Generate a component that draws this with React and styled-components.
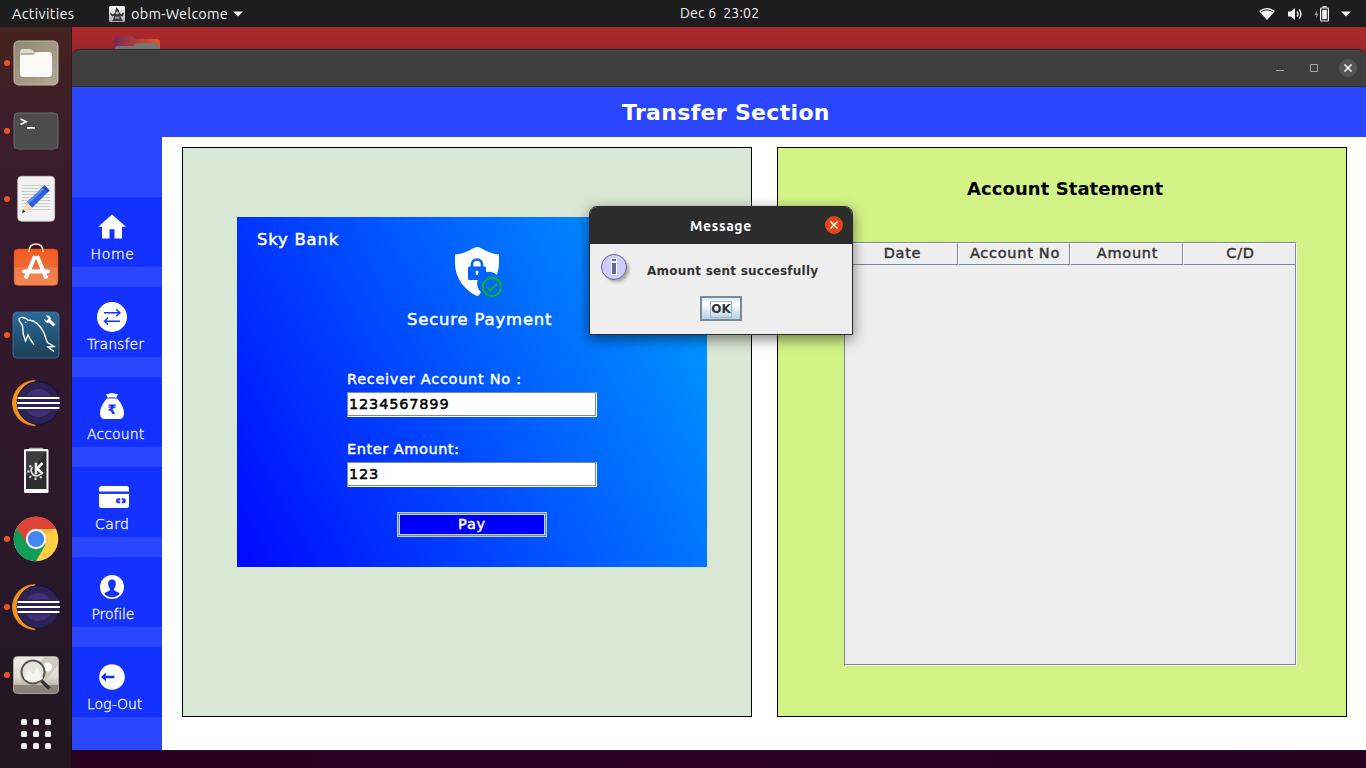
import React from "react";
import styled, { createGlobalStyle } from "styled-components";

const GlobalStyle = createGlobalStyle`
  * { box-sizing: border-box; }
  body { margin: 0; overflow: hidden; }
`;

const ui = `"Ubuntu", "Noto Sans", sans-serif`;
const swing = `"DejaVu Sans", sans-serif`;

const Desktop = styled.div`
  width: 1366px;
  height: 768px;
  display: flex;
  flex-direction: column;
  background: #2c0020;
  position: relative;
  overflow: hidden;
`;

/* ---------- top bar ---------- */
const TopBar = styled.header`
  height: 27px;
  flex: none;
  display: flex;
  align-items: center;
  background: #1d1d1d;
  color: #f2f2f2;
  font: 14.5px/27px ${ui};
  white-space: pre;
`;
const Activities = styled.span`
  width: 109px;
  padding-left: 12px;
  letter-spacing: 0.3px;
`;
const AppMenu = styled.div`
  width: 571px;
  display: flex;
  align-items: center;
  gap: 5px;
`;
const AppName = styled.span`
  margin: 0 -1px 0 1px;
  letter-spacing: 0.25px;
`;
const Clock = styled.span`
  width: 579px;
  font-size: 14px;
  letter-spacing: 0.22px;
`;
const Tray = styled.div`
  display: flex;
  align-items: center;
  gap: 11px;
`;

/* ---------- dock ---------- */
const Workspace = styled.div`
  flex: 1;
  display: flex;
  min-height: 0;
`;
const DockBar = styled.nav`
  width: 72px;
  padding-top: 2px;
  background: linear-gradient(#45231f 0%, #3d1d29 12%, #36192c 30%, #2f182b 55%, #28172a 78%, #22171d 100%);
  border-right: 1px solid rgba(20, 5, 15, 0.35);
`;
const DockItem = styled.div`
  height: 68px;
  display: flex;
  align-items: center;
`;
const RunDot = styled.i`
  width: 6px;
  height: 6px;
  margin: 0 2px 0 4px;
  border-radius: 50%;
  background: ${(p) => (p.$on ? "#e95420" : "transparent")};
`;
const AppGrid = styled.div`
  display: grid;
  grid-template-columns: repeat(3, 6px);
  gap: 6px;
  padding: 10px 0 0 21px;
`;
const GridDot = styled.i`
  height: 6px;
  border-radius: 1.5px;
  background: #eeeeec;
`;

/* ---------- window ---------- */
const Stage = styled.div`
  flex: 1;
  display: flex;
  flex-direction: column;
`;
const Wallpaper = styled.div`
  height: 31px;
  margin-bottom: -9px;
  padding: 9px 0 0 42px;
  background: linear-gradient(#ad292d, #a4272c 50%, #87222a);
`;
const TitleBar = styled.div`
  height: 38px;
  display: flex;
  align-items: center;
  justify-content: flex-end;
  gap: 18px;
  padding-right: 9px;
  background: #3e3e3e;
  border-top: 1px solid #262626;
  border-bottom: 1px solid #2a2a2a;
  border-radius: 8px 8px 0 0;
  box-shadow: inset 0 1px 0 #4b4b4b;
  position: relative;
`;
const WindowButton = styled.span`
  width: ${(p) => (p.$round ? 18 : 16)}px;
  height: 18px;
  margin-right: ${(p) => p.$nudge || 0}px;
  border-radius: 50%;
  background: ${(p) => p.$fill || "transparent"};
  display: flex;
  align-items: center;
  justify-content: center;
`;
const Banner = styled.h1`
  margin: 0;
  height: 50px;
  padding-left: 550px;
  background: #2b46ff;
  color: #fff;
  font: bold 22px/52px ${swing};
  letter-spacing: 0.32px;
`;
const Client = styled.div`
  height: 613px;
  display: flex;
  background: #fff;
`;
const Floor = styled.div`
  flex: 1;
  border-top: 1px solid #1d1820;
  background: linear-gradient(90deg, #290020, #2d0024 50%, #270020);
`;
const Sidebar = styled.aside`
  width: 90px;
  padding-top: 60px;
  background: #2b46ff;
  display: flex;
  flex-direction: column;
  gap: 20px;
`;
const NavItem = styled.div`
  height: 70px;
  padding: 13px 0 0 24px;
  background: #1432ff;
  color: #fff;
`;
const NavGlyph = styled.svg`
  display: block;
  width: 34px;
  height: 34px;
  fill: #fff;
`;
const NavLabel = styled.div`
  margin-top: 1px;
  margin-left: ${(p) => p.$shift}px;
  font: 200 14px/18px "DejaVu Sans", "DejaVu Sans Light", sans-serif;
  letter-spacing: ${(p) => p.$track || 0}px;
  -webkit-text-stroke: 0.3px #fff;
  white-space: nowrap;
`;
const Content = styled.main`
  flex: 1;
  display: flex;
  gap: 25px;
  padding: 10px 0 0 20px;
`;
const Panel = styled.section`
  width: 570px;
  height: 570px;
  border: 1px solid #000;
  background: ${(p) => p.$fill};
  padding: ${(p) => p.$pad};
`;

/* ---------- payment card ---------- */
const PayCard = styled.div`
  width: 470px;
  height: 350px;
  padding: 13px 0 0 20px;
  background: linear-gradient(61deg, #0008ff, #00a2ff);
  color: #fff;
  font-family: ${swing};
`;
const CardTitle = styled.div`
  font-size: 16.4px;
  line-height: 20px;
  letter-spacing: ${(p) => p.$track}px;
  -webkit-text-stroke: 0.5px #fff;
`;
const SecureBlock = styled.div`
  padding-left: 150px;
  margin-top: -4px;
`;
const ShieldBox = styled.div`
  height: 64px;
  padding-left: 47px;
`;
const Form = styled.form`
  padding-left: 90px;
  margin-top: 39px;
`;
const FieldLabel = styled.label`
  display: block;
  font: 14.5px/20px ${swing};
  letter-spacing: ${(p) => p.$track}px;
  -webkit-text-stroke: 0.45px #fff;
  margin-bottom: 3px;
`;
const Field = styled.input`
  display: block;
  width: 250px;
  height: 25px;
  margin-bottom: 22px;
  padding: 0 0 2px 1px;
  border: 1px solid #7a8a99;
  border-right-color: #fff;
  border-bottom-color: #fff;
  box-shadow: inset -1px -1px 0 #7a8a99;
  background: #fff;
  color: #000;
  font: 14.5px/20px ${swing};
  letter-spacing: 0.82px;
  -webkit-text-stroke: 0.5px #000;
  outline: none;
`;
const PayButton = styled.button`
  display: block;
  width: 150px;
  height: 25px;
  margin: 25px 0 0 50px;
  padding: 0 0 2px;
  border: 1px solid #b8cfe5;
  box-shadow: inset 0 0 0 1px #7a8a99, inset 0 0 0 2px #b8cfe5;
  background: #0000ff;
  color: #fff;
  font: 14.5px/20px ${swing};
  letter-spacing: 0.8px;
  -webkit-text-stroke: 0.45px #fff;
`;

/* ---------- statement ---------- */
const StatementTitle = styled.h2`
  margin: 0 0 42px 189px;
  font: bold 18px/22px ${swing};
  letter-spacing: 0.07px;
`;
const TableFrame = styled.div`
  width: 453px;
  height: 424px;
  margin-left: 66px;
  border: 1px solid #7a8a99;
  border-right-color: #fff;
  border-bottom-color: #fff;
  box-shadow: inset -1px -1px 0 #7a8a99;
  background: #eee;
`;
const HeadRow = styled.div`
  display: grid;
  grid-template-columns: 113px 112px 113px 113px;
  height: 22px;
`;
const HeadCell = styled.div`
  border-top: 1px solid #fff;
  border-left: 1px solid #fff;
  border-right: 1px solid #7a8a99;
  border-bottom: 1px solid #7a8a99;
  padding-left: 2px;
  text-align: center;
  color: #333;
  font: 14.5px/19px ${swing};
  letter-spacing: 0.72px;
  -webkit-text-stroke: 0.45px #333;
`;

/* ---------- dialog ---------- */
const Dialog = styled.div`
  position: absolute;
  left: 589px;
  top: 206px;
  width: 264px;
  height: 129px;
  border: 1px solid #2b2b2b;
  border-radius: 8px 8px 0 0;
  background: #eee;
  box-shadow: 0 4px 14px rgba(0, 0, 0, 0.5);
`;
const DialogBar = styled.div`
  height: 37px;
  display: flex;
  align-items: center;
  padding: 0 9px 2px 100px;
  justify-content: space-between;
  border-radius: 7px 7px 0 0;
  background: #2c2c2c;
  color: #fff;
  font: bold 14px/38px ${ui};
  letter-spacing: 0.6px;
`;
const DialogTitle = styled.span`
  padding-top: 2px;
`;
const DialogBody = styled.div`
  display: flex;
  padding: 8px 0 0 9px;
  height: 52px;
`;
const DialogText = styled.div`
  margin-left: 16px;
  padding-top: 9px;
  color: #333;
  font: bold 12px/20px ${swing};
  letter-spacing: 0.24px;
  white-space: nowrap;
`;
const OkButton = styled.button`
  display: block;
  width: 42px;
  height: 25px;
  margin: 0 0 0 110px;
  padding: 2px 0 0;
  border: 2px solid #7a8a99;
  background: linear-gradient(#dde8f3, #fff 30%, #dde8f3 60%, #b8cfe5);
`;
const OkFocus = styled.span`
  display: block;
  width: 22px;
  height: 17px;
  margin: 0 auto;
  border: 1px solid #a3b8cc;
  color: #333;
  font: bold 12px/15px ${swing};
`;

/* ---------- dock drawings ---------- */
const Svg48 = ({ children }) => (
  <svg width="48" height="48" viewBox="0 0 48 48">{children}</svg>
);

const FilesIcon = () => (
  <Svg48>
    <defs>
      <linearGradient id="fl" x1="0" y1="0" x2="1" y2="1">
        <stop offset="0" stopColor="#8f8770" /><stop offset="1" stopColor="#b1a993" />
      </linearGradient>
    </defs>
    <rect x="2" y="2" width="44" height="44" rx="4.5" fill="url(#fl)" stroke="#c4bda8" strokeWidth="1" />
    <path d="M8 13q0-3 3-3h7q2 0 3 1.500l1.500 2H36q4 0 4 3v4H8z" fill="#dedace" />
    <rect x="8" y="14" width="32" height="25" rx="3" fill="#877f6b" opacity=".45" />
    <path d="M8 17q0-1 1-1h12q1 0 1.500-1l1-1.500q.5-.5 1.500-.5h12q3 0 3 3v19q0 3-3 3H11q-3 0-3-3z" fill="#faf9f8" />
  </Svg48>
);
const TerminalIcon = () => (
  <Svg48>
    <rect x="2" y="6" width="44" height="36" rx="4" fill="#4c4c4c" stroke="#6b6b6b" />
    <path d="M8.500 12l5.500 2.700-5.500 2.700M15 20.800h8" fill="none" stroke="#fff" strokeWidth="1.700" />
  </Svg48>
);
const NotesIcon = () => (
  <Svg48>
    <rect x="5.700" y="1.300" width="37" height="45" rx="4" fill="#f2f2f2" stroke="#c9c9c9" strokeWidth=".7" />
    {[10, 13, 16, 19, 22, 25, 28, 31, 34].map((y) => (
      <path key={y} d={`M10 ${y + 0.500}h28`} stroke="#c8c8c8" strokeWidth=".9" />
    ))}
    <path d="M32.500 10.500l5 5-17.500 17.500-5.500-5.500z" fill="#2f62d4" />
    <path d="M32.500 10.500l1.700 1.700-18 17.200-1.700-1.900z" fill="#5b8bee" />
    <path d="M32.500 10.500l5 5-2 2-5-5z" fill="#1d4db5" />
    <path d="M15 27.200l5.300 5.700-10.300 5z" fill="#f7d9b8" />
    <path d="M11 34.500l2.500 2L10 38.200z" fill="#333" />
  </Svg48>
);
const StoreIcon = () => (
  <Svg48>
    <defs>
      <linearGradient id="so" x1="0" y1="0" x2="0" y2="1">
        <stop offset="0" stopColor="#f45a22" /><stop offset=".5" stopColor="#ee6a35" />
        <stop offset=".51" stopColor="#f07b48" /><stop offset="1" stopColor="#f28654" />
      </linearGradient>
    </defs>
    <rect x="2" y="6" width="44" height="36.500" rx="4" fill="url(#so)" stroke="#b9441b" strokeWidth=".6" />
    <path d="M17 9q0-8 7-8t7 8" fill="none" stroke="#f3dcae" strokeWidth="1.700" />
    <path d="M23 13L13.500 35.500M25 13L34.500 35.500" stroke="#fff" strokeWidth="4" />
    <rect x="10" y="26.500" width="28" height="4" rx="2" fill="#fff" />
  </Svg48>
);
const DolphinIcon = () => (
  <Svg48>
    <defs>
      <linearGradient id="my" x1="0" y1="0" x2="0" y2="1">
        <stop offset="0" stopColor="#2b6a9a" /><stop offset="1" stopColor="#1c3f55" />
      </linearGradient>
    </defs>
    <rect x="1" y="1" width="46" height="46" rx="4" fill="url(#my)" stroke="#3b7aa5" strokeWidth=".8" />
    <path d="M7 8C8 5.500 13 6 16 9c7 0 13 6 16 13 1.500 4 2 6.500 3.500 9.500l6.500 4-6 .5 6 4.500M7 8c-.5 2.500 2.500 4 3.500 7 0 5 .5 9 3 15l2.500-6c1.500 3.500 3.500 6 6 10" fill="none" stroke="#fff" strokeWidth="1.400" />
    <circle cx="13.500" cy="11.500" r=".8" fill="#fff" />
    <path d="M33.500 4.500l3 3-1.500 2-3-1.500c.5 3 3 4.500 5 3.500l4.500 4 2-2-4.500-4.500c.5-3-2-5-5.500-4.500z" fill="#fff" />
  </Svg48>
);
const EclipseIcon = () => (
  <Svg48>
    <path d="M23 1.500A22.500 22.500 0 0 0 23 46.500z" fill="#f7941e" stroke="#f7941e" strokeWidth=".8" />
    <circle cx="26.500" cy="24" r="21.300" fill="#2c2255" stroke="#1b1433" strokeWidth="1.200" />
    <circle cx="26.300" cy="24" r="14" fill="#3f3078" />
    <path d="M5.500 16.500h41.500v15H5.500z" fill="#2c2255" />
    <path d="M5.500 19h42M5 24h43M5.500 29h42" stroke="#fff" strokeWidth="2.100" />
  </Svg48>
);
const PhoneIcon = () => (
  <Svg48>
    <rect x="17" y=".8" width="14" height="3" rx="1" fill="#aaa" />
    <rect x="12" y="2" width="24.500" height="44" rx="1.500" fill="#fafafa" />
    <rect x="14" y="4.500" width="20.500" height="37.500" fill="#2d2d2d" />
    <path d="M14 4.500h20.500L14 30z" fill="#3d3d3d" />
    <path d="M20.500 20a5.300 5.300 0 1 0 8 7" fill="none" stroke="#ddd" strokeWidth="1.800" />
    <path d="M19 20l-1.500-1.500M17.500 24.500h-2.300M19 29l-1.600 1.600M23.500 30.500V33M28 29.500l1.500 1.500" stroke="#ddd" strokeWidth="2" />
    <path d="M24 15.800v11.500M30.500 16L25.200 21.500l5.600 5.500" stroke="#f2f2f2" strokeWidth="2.600" fill="none" />
  </Svg48>
);
const ChromeIcon = () => (
  <Svg48>
    <circle cx="24" cy="24" r="22.300" fill="#ffce44" />
    <path d="M24 24L4.700 12.900A22.300 22.300 0 0 0 24 46.300L33.500 29.500z" fill="#109d58" />
    <path d="M4.700 12.900A22.300 22.300 0 0 1 44.300 14H24l-8.700 15z" fill="#dc4437" />
    <path d="M24 14h20.300l-12 5z" fill="#c9972b" opacity=".35" />
    <circle cx="24" cy="24" r="10.200" fill="#f3f3f3" />
    <circle cx="24" cy="24" r="8.100" fill="#4285f4" />
  </Svg48>
);
const ViewerIcon = () => (
  <Svg48>
    <defs>
      <linearGradient id="vw" x1="0" y1="0" x2="0" y2="1">
        <stop offset="0" stopColor="#efeee8" /><stop offset=".55" stopColor="#dedcd3" /><stop offset="1" stopColor="#9a938a" />
      </linearGradient>
    </defs>
    <rect x="1.500" y="5.500" width="45" height="37" rx="4" fill="url(#vw)" stroke="#a8a298" />
    <path d="M32 6h10q4 0 4 4v4L30 34H12z" fill="#bbb6aa" opacity=".6" />
    <path d="M2 34h44v4q0 4-4 4H6q-4 0-4-4z" fill="#7d746c" opacity=".75" />
    <circle cx="35.500" cy="16" r="4.500" fill="#fff" />
    <circle cx="21" cy="21" r="11.500" fill="#e6e6e1" stroke="#565656" strokeWidth="2" />
    <path d="M12 27l5-9 4 5 4-7 6 11c-4 5-15 5-19 0z" fill="#f4f4f1" />
    <path d="M29.500 30l8 7.500" stroke="#333" strokeWidth="3.400" />
  </Svg48>
);

/* ---------- sidebar drawings ---------- */
const navBlue = "#1432ff";
const Svg34 = ({ children }) => <NavGlyph viewBox="0 0 34 34">{children}</NavGlyph>;
const HomeIcon = () => (
  <Svg34><path d="M16 4.500L30 16.800H26V28.500H18.500V19.300H13.500V28.500H6V16.800H2.300z" /></Svg34>
);
const TransferIcon = () => (
  <Svg34>
    <circle cx="16" cy="17" r="15" />
    <path d="M8 12.800h15.500M20.300 9.300l3.500 3.500-3.500 3.500M24 21.300H8.500M12 17.800l-3.500 3.500 3.500 3.500" fill="none" stroke={navBlue} strokeWidth="1.500" />
  </Svg34>
);
const BagIcon = () => (
  <Svg34>
    <path d="M10 4q2 .5 3.500-.5 2.500-1 5 0 1.500 1 3.500.5l-1.500 3.500h-9z" />
    <path d="M11 8.500h10c3 3 7 9 7 14.500 0 4-2 6-5 6H9c-3 0-5-2-5-6C4 17.500 8 11.500 11 8.500z" />
    <text x="16" y="23.500" textAnchor="middle" fill={navBlue} fontFamily="DejaVu Sans" fontWeight="bold" fontSize="13">₹</text>
  </Svg34>
);
const CardIcon = () => (
  <Svg34>
    <rect x="3" y="6" width="30" height="22" rx="2.500" />
    <path d="M3 12.700h30" stroke={navBlue} strokeWidth="2.400" />
    <path d="M24.200 18.300h-1.700a2.500 2.500 0 0 0 0 5h1.700zM25.800 18.300h1.500a2.500 2.500 0 0 1 0 5h-1.500z" fill={navBlue} />
    <path d="M22.500 20.800h1.700M25.800 20.800h1.500" stroke="#fff" strokeWidth="1" />
  </Svg34>
);
const ProfileIcon = () => (
  <Svg34>
    <circle cx="16" cy="17" r="12" />
    <path d="M16 9.500c3 0 4 2.300 3.800 5-.2 2-1 3.300-1.800 4.300 0 1.700.4 2 2.300 2.700 1.700.6 3 1 3.400 2.300a10.300 10.300 0 0 1-15.400 0c.4-1.300 1.700-1.700 3.400-2.300 1.900-.7 2.300-1 2.300-2.700-.8-1-1.600-2.300-1.800-4.300-.2-2.700.8-5 3.800-5z" fill={navBlue} />
  </Svg34>
);
const LogoutIcon = () => (
  <Svg34>
    <circle cx="16" cy="17" r="12.800" />
    <path d="M5 17l5-4.500v3.300h8.500v2.400H10v3.300z" fill={navBlue} />
  </Svg34>
);

const ShieldIcon = () => (
  <svg width="50" height="52" viewBox="0 0 50 52">
    <path d="M23.500 1C27 1 34 7.500 45 8.500v8.500c0 3.500-.8 8-2.200 12a11.600 11.600 0 0 0-16 17c-.8 2-2 4-3.800 4C12 45 1 33 1 17V8.500C12.500 7.500 19.500 1 23.500 1z" fill="#fff" />
    <rect x="14" y="20.500" width="18" height="13.500" rx="1.200" fill="#0062ff" />
    <path d="M18 21v-2.500a5 5 0 0 1 10 0V21" fill="none" stroke="#0062ff" strokeWidth="2.600" />
    <path d="M23 25.500v3.500" stroke="#fff" strokeWidth="1.800" />
    <circle cx="23" cy="26" r="1.500" fill="#fff" />
    <circle cx="38" cy="41" r="9.200" fill="none" stroke="#12b312" strokeWidth="1.900" />
    <path d="M33 41l3.500 3.700 6.500-6.700" fill="none" stroke="#12b312" strokeWidth="1.900" />
  </svg>
);

const InfoIcon = () => (
  <svg width="32" height="32" viewBox="0 0 32 32">
    <defs>
      <filter id="soft"><feGaussianBlur stdDeviation="1.500" /></filter>
    </defs>
    <circle cx="17.500" cy="17.500" r="12.500" fill="#888" opacity=".7" filter="url(#soft)" />
    <circle cx="15" cy="15" r="12.500" fill="#ccccff" stroke="#666699" />
    <rect x="12" y="6" width="6" height="5" fill="#fff" />
    <rect x="12" y="10" width="6" height="13" fill="#fff" />
    <rect x="13" y="7" width="4" height="2" fill="#666699" />
    <rect x="13" y="11" width="4" height="11" fill="#666699" />
  </svg>
);
const CloseMark = () => (
  <svg width="10" height="10" viewBox="0 0 10 10"><path d="M1.500 1.500l7 7M8.500 1.500l-7 7" stroke="#fff" strokeWidth="1.500" /></svg>
);
const Caret = () => (
  <svg width="12" height="8" viewBox="0 0 12 8"><path d="M1 1.500h10L6 6.500z" fill="#f2f2f2" /></svg>
);
const DukeIcon = () => (
  <svg width="16" height="16" viewBox="0 0 16 16">
    <defs>
      <linearGradient id="dk" x1="0" y1="0" x2="0" y2="1"><stop offset="0" stopColor="#fff" /><stop offset="1" stopColor="#aaa" /></linearGradient>
    </defs>
    <rect width="16" height="16" rx="1.500" fill="url(#dk)" />
    <path d="M7.500 1l2.500 3.500.5 2.500 2 1.500 1-2 1.500.5-1 3.500-2.500-.5 1 3 1.500 2H3l1.500-2 .7-3L3 10.500l-2-3 1-.5 1.700 1.500L6 7l.5-3z" fill="#333" />
    <circle cx="8.200" cy="7" r="1.600" fill="#bbb" />
    <path d="M6 10.500h4.500v2.500H6z" fill="#888" />
  </svg>
);

const DOCK = [
  [FilesIcon, 1], [TerminalIcon, 1], [NotesIcon, 1], [StoreIcon, 0], [DolphinIcon, 1],
  [EclipseIcon, 0], [PhoneIcon, 0], [ChromeIcon, 1], [EclipseIcon, 1], [ViewerIcon, 1],
];
const NAV = [
  ["Home", HomeIcon, -5.5, 0.7], ["Transfer", TransferIcon, -9, 0.1], ["Account", BagIcon, -9, 0.1],
  ["Card", CardIcon, -1, 0.4], ["Profile", ProfileIcon, -4.5, -0.1], ["Log-Out", LogoutIcon, -9, 0],
];

export default function App() {
  return (
    <Desktop>
      <GlobalStyle />
      <TopBar>
        <Activities>Activities</Activities>
        <AppMenu>
          <DukeIcon />
          <AppName>obm-Welcome</AppName>
          <Caret />
        </AppMenu>
        <Clock>Dec 6  23:02</Clock>
        <Tray>
          <svg width="16" height="14" viewBox="0 0 16 14">
            <path d="M0 4Q8-2 16 4L8 13z" fill="#f2f2f2" />
            <path d="M1.800 5Q8 .8 14.200 5" fill="none" stroke="#1d1d1d" strokeWidth="1" />
          </svg>
          <svg width="17" height="14" viewBox="-2 0 17 14">
            <path d="M0 4.500h3L7 1v12L3 9.500H0z" fill="#f2f2f2" />
            <path d="M9 4.500q2 2.500 0 5M11.200 2.500q3.400 4.500 0 9" fill="none" stroke="#f2f2f2" strokeWidth="1.400" />
          </svg>
          <svg width="15" height="16" viewBox="-2 0 15 16">
            <path d="M1.500 3.500L-1.500 9h2L0 12.500 2.500 7.500h-2z" fill="#999" />
            <path d="M6.500 0h4v1.500h-4z" fill="#f2f2f2" />
            <rect x="4.600" y="2" width="7.800" height="13" rx=".8" fill="none" stroke="#f2f2f2" strokeWidth="1.200" />
            <rect x="6.200" y="3.800" width="4.600" height="9.400" fill="#f2f2f2" />
          </svg>
          <Caret />
        </Tray>
      </TopBar>
      <Workspace>
        <DockBar>
          {DOCK.map(([Icon, on], i) => (
            <DockItem key={i}><RunDot $on={on} /><Icon /></DockItem>
          ))}
          <AppGrid>{Array.from({ length: 9 }, (_, i) => <GridDot key={i} />)}</AppGrid>
        </DockBar>
        <Stage>
          <Wallpaper>
            <svg width="46" height="20" viewBox="0 0 46 20">
              <defs>
                <linearGradient id="fd"><stop offset="0" stopColor="#772953" /><stop offset="1" stopColor="#e95420" /></linearGradient>
              </defs>
              <path d="M0 20V4q0-4 4-4h12q2 0 3 1l2 2h22q3 0 3 3v14z" fill="url(#fd)" />
              <path d="M1 20v-7q0-3 3-3h14q1 0 2-1l1-1q1-1 2-1h18q4 0 4 3v10z" fill="#747474" />
            </svg>
          </Wallpaper>
          <TitleBar>
            <WindowButton><svg width="8" height="10" viewBox="0 0 8 10"><path d="M0 7.500h8" stroke="#a5a5a5" /></svg></WindowButton>
            <WindowButton $nudge={-1}><svg width="8" height="8" viewBox="0 0 8 8"><path d="M.5.5h7v7h-7z" fill="none" stroke="#a5a5a5" /></svg></WindowButton>
            <WindowButton $round $fill="#565656"><CloseMark /></WindowButton>
          </TitleBar>
          <Banner>Transfer Section</Banner>
          <Client>
            <Sidebar>
              {NAV.map(([label, Icon, shift, track]) => (
                <NavItem key={label}>
                  <Icon />
                  <NavLabel $shift={shift} $track={track}>{label}</NavLabel>
                </NavItem>
              ))}
            </Sidebar>
            <Content>
              <Panel $fill="#d9e8d4" $pad="69px 0 0 54px">
                <PayCard>
                  <CardTitle $track={0.82}>Sky Bank</CardTitle>
                  <SecureBlock>
                    <ShieldBox><ShieldIcon /></ShieldBox>
                    <CardTitle $track={0.86}>Secure Payment</CardTitle>
                  </SecureBlock>
                  <Form>
                    <FieldLabel $track={0.72}>Receiver Account No :</FieldLabel>
                    <Field defaultValue="1234567899" />
                    <FieldLabel $track={0.55}>Enter Amount:</FieldLabel>
                    <Field defaultValue="123" />
                    <PayButton type="button">Pay</PayButton>
                  </Form>
                </PayCard>
              </Panel>
              <Panel $fill="#d3f386" $pad="30px 0 0 0">
                <StatementTitle>Account Statement</StatementTitle>
                <TableFrame>
                  <HeadRow>
                    {["Date", "Account No", "Amount", "C/D"].map((h) => <HeadCell key={h}>{h}</HeadCell>)}
                  </HeadRow>
                </TableFrame>
              </Panel>
            </Content>
          </Client>
          <Floor />
        </Stage>
      </Workspace>
      <Dialog>
        <DialogBar>
          <DialogTitle>Message</DialogTitle>
          <WindowButton $round $fill="#e2491a"><CloseMark /></WindowButton>
        </DialogBar>
        <DialogBody>
          <InfoIcon />
          <DialogText>Amount sent succesfully</DialogText>
        </DialogBody>
        <OkButton><OkFocus>OK</OkFocus></OkButton>
      </Dialog>
    </Desktop>
  );
}
